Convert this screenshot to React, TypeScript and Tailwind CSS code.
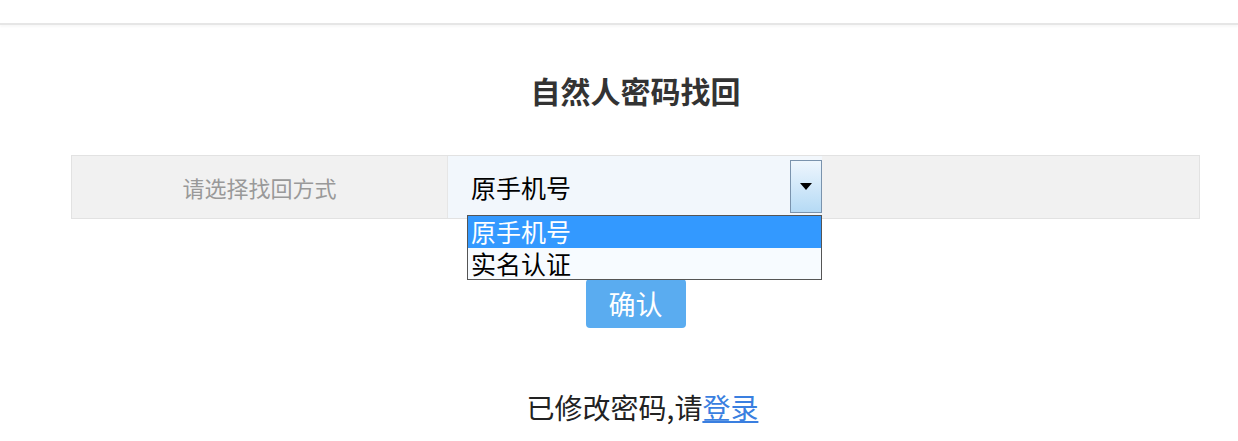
import React from "react";

const font = { fontFamily: '"Noto Sans CJK SC", "Noto Sans", sans-serif' };

export default function App() {
  return (
    <div className="w-[1238px] h-[441px] bg-white overflow-hidden" style={font}>
      <div className="h-[25px] border-b-2 border-[#e6e6e6] shadow-[0_2px_2px_rgba(0,0,0,0.03)]" />
      <div className="ml-[71px] w-[1129px] flex flex-col items-center">
        <h1 className="mt-[43px] h-[44px] text-[30px] leading-[44px] font-bold text-[#333]">自然人密码找回</h1>
        <div className="mt-[43px] w-full h-[64px] flex border border-[#e2e2e2] bg-[#f1f1f1]">
          <div className="w-[376px] flex items-center justify-center border-r border-[#e6e6e6] text-[22px] text-[#999]">
            请选择找回方式
          </div>
          <div className="relative w-[374px] h-full bg-[#f2f7fc] flex items-center">
            <span className="ml-[23px] text-[25px] text-black leading-none">原手机号</span>
            <div className="absolute right-0 top-[4px] w-[32px] h-[53px] border border-[#7a93ad] bg-gradient-to-b from-[#eef6fd] to-[#b5daf5] flex items-center justify-center">
              <svg width="12" height="7" viewBox="0 0 12 7">
                <path d="M0 0 H12 L6 7 Z" fill="#000" />
              </svg>
            </div>
            <div className="absolute left-[19px] top-[59px] w-[355px] border border-[#555] bg-white z-10 text-[25px] leading-[31px]">
              <div className="h-[32px] bg-[#3399ff] text-white pl-[3px]">原手机号</div>
              <div className="h-[31px] bg-[#f7fbff] text-black pl-[3px]">实名认证</div>
            </div>
          </div>
        </div>
        <button className="mt-[60px] w-[100px] h-[49px] bg-[#5aacf0] rounded-[4px] text-white text-[27px] leading-none flex items-center justify-center">
          确认
        </button>
        <div className="mt-[59px] ml-[14px] text-[28px] leading-[40px] text-[#222]">
          已修改密码,请<a className="text-[#3a7fe0] underline underline-offset-2">登录</a>
        </div>
      </div>
    </div>
  );
}
